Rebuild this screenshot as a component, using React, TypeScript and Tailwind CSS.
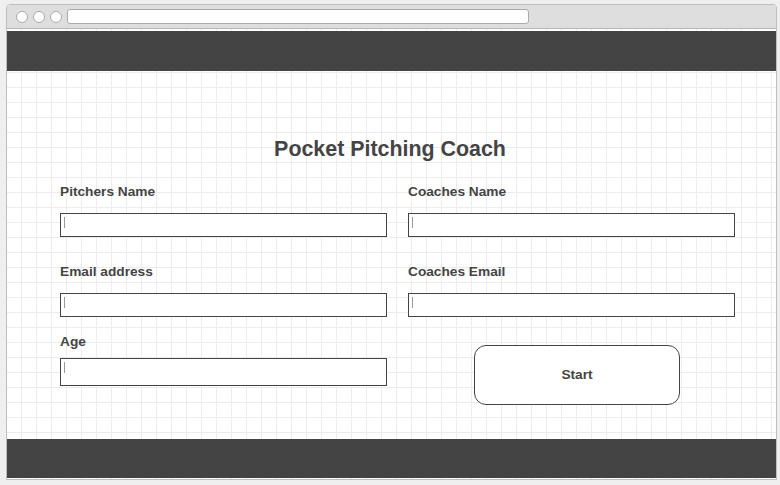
import React from 'react';

const font = { fontFamily: '"Liberation Sans", Arial, Helvetica, sans-serif' };

function Field({ label, inputClass }: { label: string; inputClass: string }) {
  return (
    <div className="flex flex-col">
      <div className="h-[16px] text-[13.7px] leading-[18px] font-bold text-[#444]">{label}</div>
      <div className={`relative w-[327px] bg-white border border-[#444] ${inputClass}`}>
        {/* fake caret */}
        <div className="absolute left-[3px] top-[3px] w-px h-[11px] bg-[#999]" />
      </div>
    </div>
  );
}

export default function App() {
  return (
    <div className="w-[780px] h-[485px] bg-[#efefef] pt-[4px] pl-[6px] overflow-hidden" style={font}>
      <div className="w-[771px] h-[476px] flex flex-col border border-[#bdbdbd] rounded-t-[4px] bg-white overflow-hidden">
        {/* Browser chrome */}
        <div className="h-[24px] shrink-0 bg-[#dedede] border-b border-[#b5b5b5] flex items-center pl-[9px] gap-[5px]">
          <div className="w-[12px] h-[12px] rounded-full bg-white border border-[#aaa]" />
          <div className="w-[12px] h-[12px] rounded-full bg-white border border-[#aaa]" />
          <div className="w-[12px] h-[12px] rounded-full bg-white border border-[#aaa]" />
          <div className="w-[462px] h-[15px] rounded-[3px] bg-white border border-[#aaa]" />
        </div>

        {/* Page */}
        <div
          className="flex-1 flex flex-col pt-[2px] bg-white"
          style={{
            backgroundImage:
              'linear-gradient(#ececec 1px, transparent 1px), linear-gradient(90deg, #ececec 1px, transparent 1px)',
            backgroundSize: '15px 15px',
            backgroundPosition: '14px 13px',
          }}
        >
          <div className="h-[40px] shrink-0 bg-[#444]" />

          <div className="h-[368px] shrink-0 flex flex-col pl-[53px] pt-[66px]">
            <div className="w-[660px] text-center h-[24px] leading-[24px] text-[21.4px] font-bold text-[#444]">
              Pocket Pitching Coach
            </div>

            <div className="mt-[22px] flex gap-[21px]">
              <Field label="Pitchers Name" inputClass="mt-[14px] h-[24px]" />
              <Field label="Coaches Name" inputClass="mt-[14px] h-[24px]" />
            </div>

            <div className="mt-[26px] flex gap-[21px]">
              <Field label="Email address" inputClass="mt-[14px] h-[24px]" />
              <Field label="Coaches Email" inputClass="mt-[14px] h-[24px]" />
            </div>

            <div className="mt-[16px] flex gap-[21px]">
              <Field label="Age" inputClass="mt-[9px] h-[28px]" />
              <div className="w-[327px]">
                <button className="mt-[12px] ml-[66px] w-[206px] h-[60px] rounded-[12px] border border-[#444] bg-white text-[13.7px] font-bold text-[#444]">
                  Start
                </button>
              </div>
            </div>
          </div>

          <div className="h-[39px] shrink-0 bg-[#444]" />
        </div>
      </div>
    </div>
  );
}
